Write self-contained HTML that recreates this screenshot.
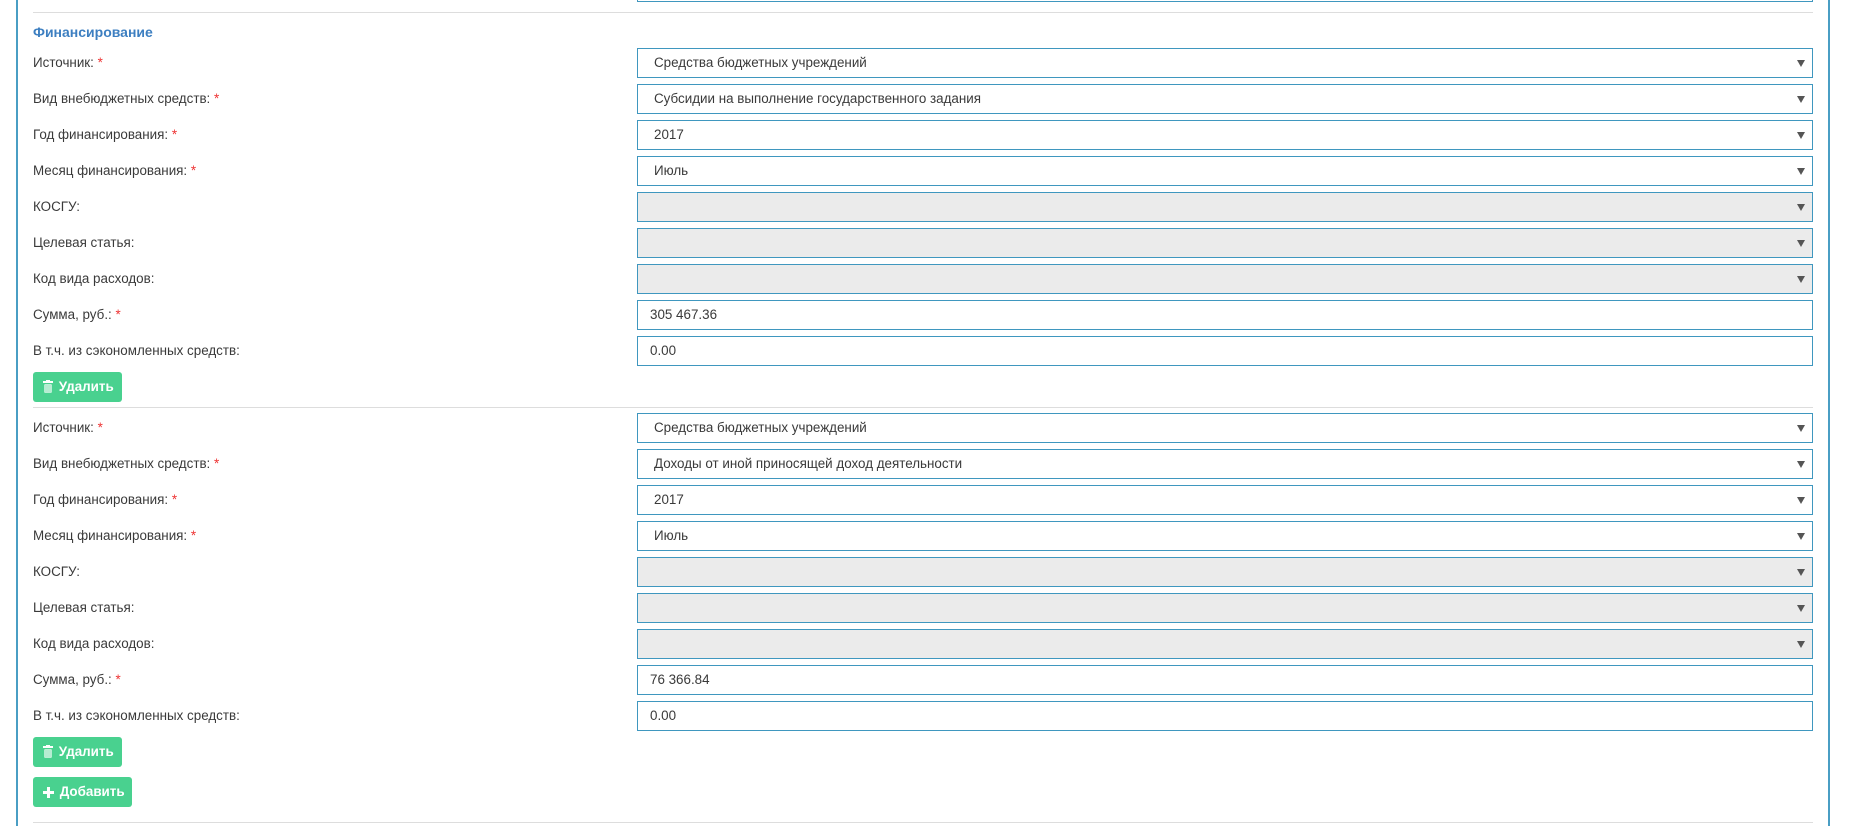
<!DOCTYPE html>
<html><head><meta charset="utf-8"><style>
*{box-sizing:border-box;margin:0;padding:0}
body{width:1849px;height:826px;background:#fff;font-family:"Liberation Sans",sans-serif;font-size:13.4px;color:#3a3a3a;position:relative;overflow:hidden}
.bl{position:absolute;left:16px;top:0;width:2px;height:826px;background:#4a9ec4}
.br{position:absolute;left:1828px;top:0;width:2px;height:826px;background:#4a9ec4}
.hr{position:absolute;left:33px;width:1780px;height:1px;background:#ddd}
.h{position:absolute;left:33px;top:24px;font-weight:bold;color:#3d7fc1;font-size:14px}
.lab{position:absolute;left:33px;line-height:30px;height:30px}
.lab i{color:#e33;font-style:normal}
.f{position:absolute;left:637px;width:1176px;height:30px;border:1.5px solid #3f97bf;background:#fff;line-height:27px;padding-left:16px}
.f.in{padding-left:12px}
.f.dis{background:#ebebeb}
.f.sel:after{content:"";position:absolute;right:7px;top:11px;border-left:4px solid transparent;border-right:4px solid transparent;border-top:7px solid #555}
.btn{position:absolute;left:33px;height:30px;background:#49d18f;border-radius:3px;color:#fff;font-weight:bold;line-height:30px;padding-left:10px;font-size:13.4px}
.btn svg{vertical-align:-2px;margin-right:2px}
</style></head><body>
<div class="bl"></div><div class="br"></div>
<div class="f in" style="top:-28px"></div>
<div class="hr" style="top:12px"></div>
<div class="h">Финансирование</div>

<div class="lab" style="top:48px">Источник: <i>*</i></div><div class="f sel" style="top:48px">Средства бюджетных учреждений</div>
<div class="lab" style="top:84px">Вид внебюджетных средств: <i>*</i></div><div class="f sel" style="top:84px">Субсидии на выполнение государственного задания</div>
<div class="lab" style="top:120px">Год финансирования: <i>*</i></div><div class="f sel" style="top:120px">2017</div>
<div class="lab" style="top:156px">Месяц финансирования: <i>*</i></div><div class="f sel" style="top:156px">Июль</div>
<div class="lab" style="top:192px">КОСГУ:</div><div class="f sel dis" style="top:192px"></div>
<div class="lab" style="top:228px">Целевая статья:</div><div class="f sel dis" style="top:228px"></div>
<div class="lab" style="top:264px">Код вида расходов:</div><div class="f sel dis" style="top:264px"></div>
<div class="lab" style="top:300px">Сумма, руб.: <i>*</i></div><div class="f in" style="top:300px">305 467.36</div>
<div class="lab" style="top:336px">В т.ч. из сэкономленных средств:</div><div class="f in" style="top:336px">0.00</div>
<div class="btn" style="top:372px;width:89px"><svg width="10" height="13" viewBox="0 0 10 13"><rect x="0" y="1" width="10" height="2" fill="#fff"/><rect x="3" y="0" width="4" height="2" fill="#fff"/><path d="M1 4h8v9H1z M3 5v7 M5 5v7 M7 5v7" fill="#fff" stroke="#49d18f" stroke-width=".8"/></svg> Удалить</div>
<div class="hr" style="top:407px"></div>

<div class="lab" style="top:413px">Источник: <i>*</i></div><div class="f sel" style="top:413px">Средства бюджетных учреждений</div>
<div class="lab" style="top:449px">Вид внебюджетных средств: <i>*</i></div><div class="f sel" style="top:449px">Доходы от иной приносящей доход деятельности</div>
<div class="lab" style="top:485px">Год финансирования: <i>*</i></div><div class="f sel" style="top:485px">2017</div>
<div class="lab" style="top:521px">Месяц финансирования: <i>*</i></div><div class="f sel" style="top:521px">Июль</div>
<div class="lab" style="top:557px">КОСГУ:</div><div class="f sel dis" style="top:557px"></div>
<div class="lab" style="top:593px">Целевая статья:</div><div class="f sel dis" style="top:593px"></div>
<div class="lab" style="top:629px">Код вида расходов:</div><div class="f sel dis" style="top:629px"></div>
<div class="lab" style="top:665px">Сумма, руб.: <i>*</i></div><div class="f in" style="top:665px">76 366.84</div>
<div class="lab" style="top:701px">В т.ч. из сэкономленных средств:</div><div class="f in" style="top:701px">0.00</div>
<div class="btn" style="top:737px;width:89px"><svg width="10" height="13" viewBox="0 0 10 13"><rect x="0" y="1" width="10" height="2" fill="#fff"/><rect x="3" y="0" width="4" height="2" fill="#fff"/><path d="M1 4h8v9H1z M3 5v7 M5 5v7 M7 5v7" fill="#fff" stroke="#49d18f" stroke-width=".8"/></svg> Удалить</div>
<div class="btn" style="top:777px;width:99px"><svg width="11" height="11" viewBox="0 0 11 11"><path d="M4 0h3v4h4v3H7v4H4V7H0V4h4z" fill="#fff"/></svg> Добавить</div>
<div class="hr" style="top:822px"></div>
</body></html>
